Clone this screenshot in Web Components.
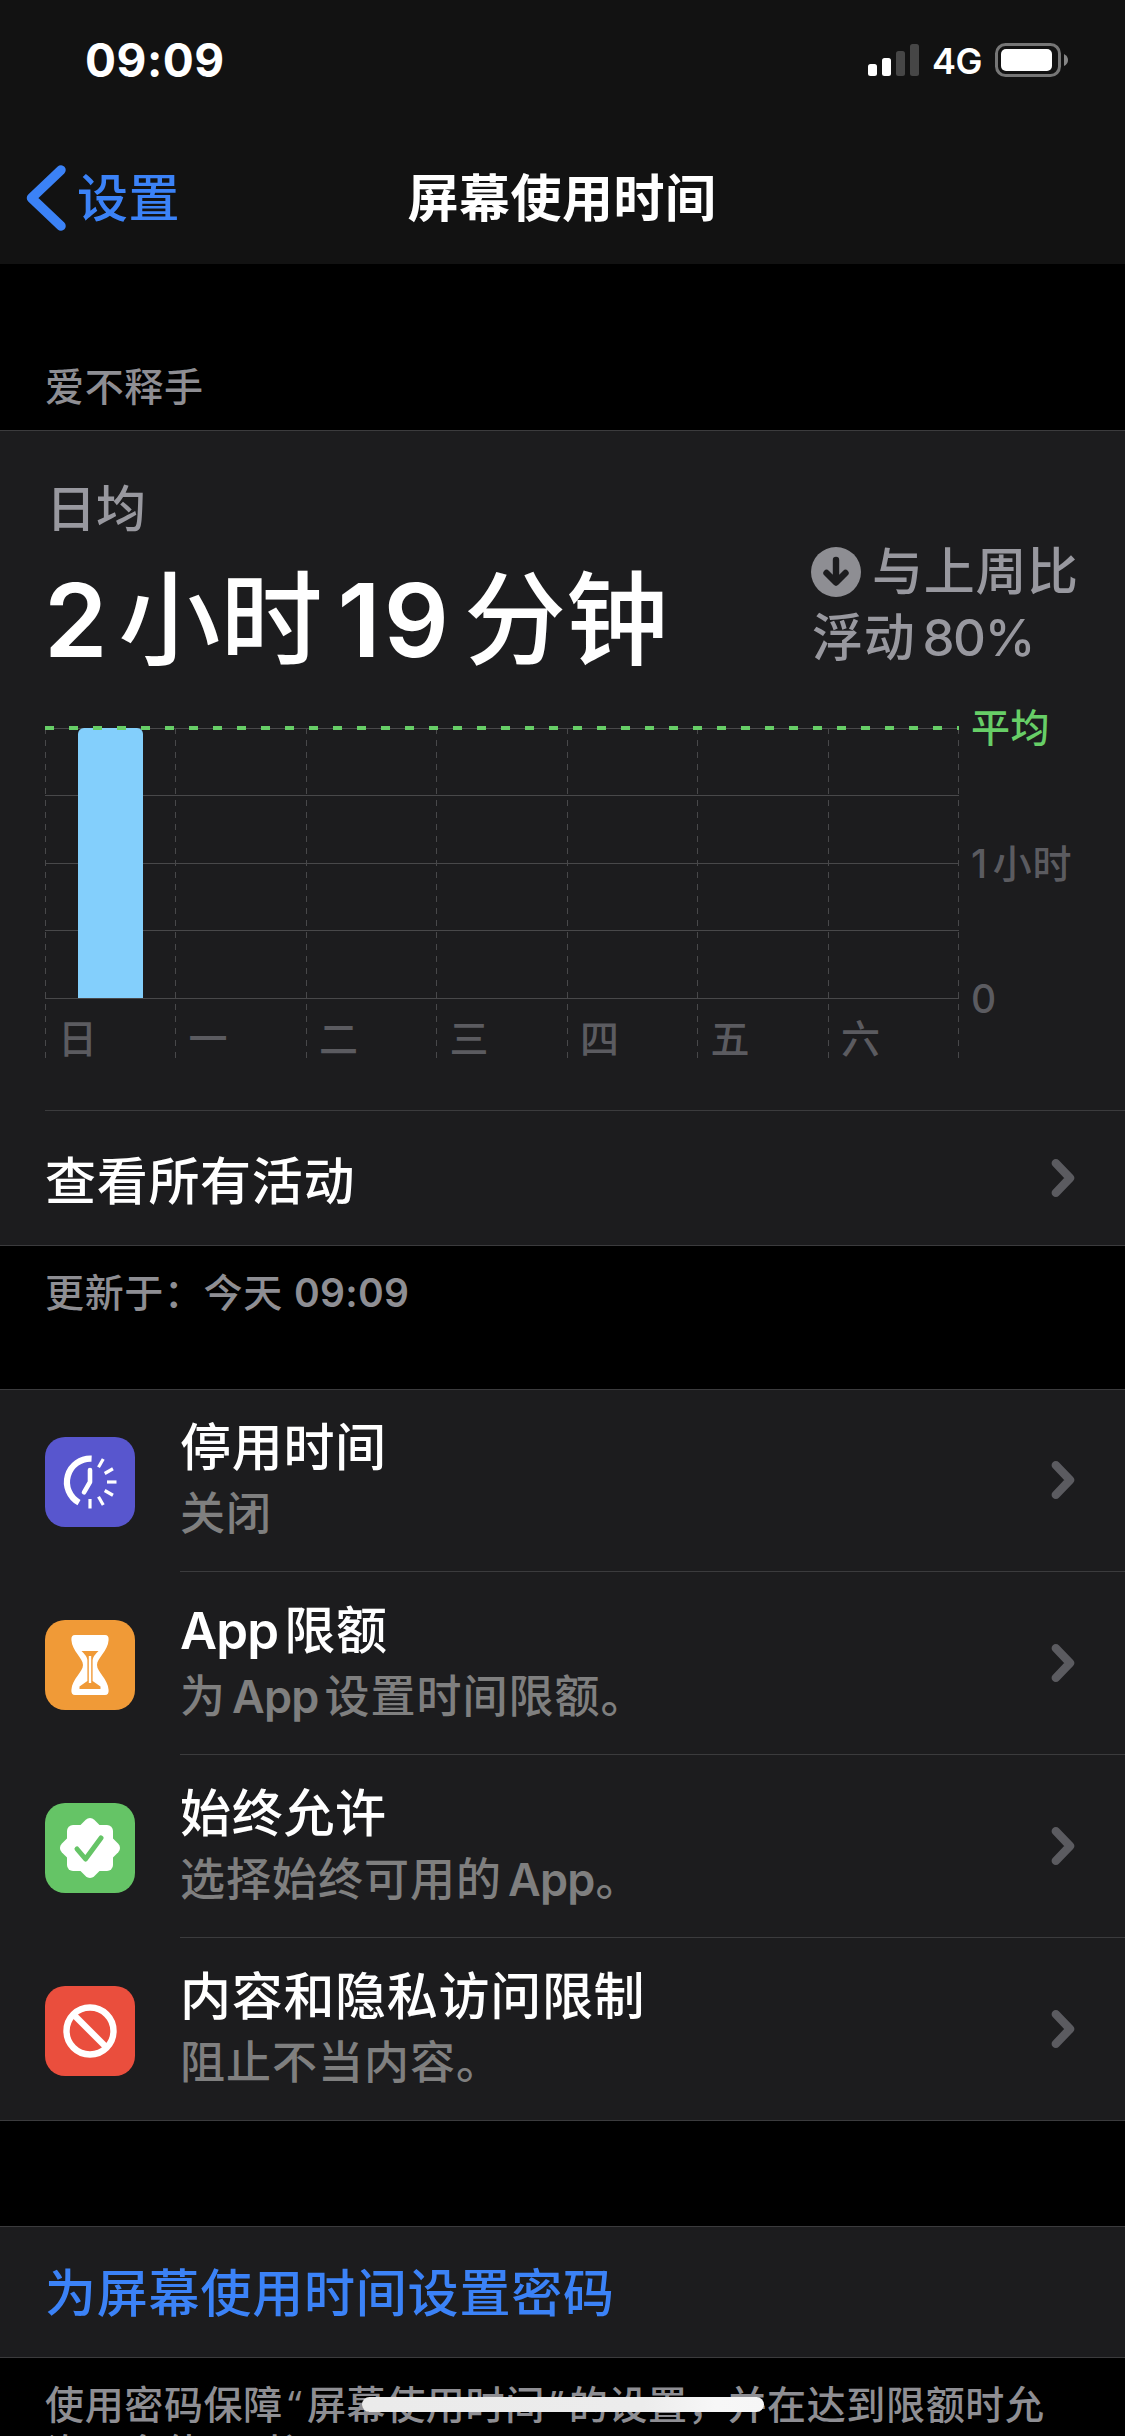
<!DOCTYPE html>
<html lang="zh-CN">
<head>
<meta charset="utf-8">
<title>屏幕使用时间</title>
<style>
  html, body { margin: 0; background: #000; }
  body {
    width: 1125px; height: 2436px; overflow: hidden; color: #fff;
    font-family: Inter, "Noto Sans CJK SC", sans-serif; font-weight: 500;
    --card: #1c1c1e; --line: #3b3b3d; --gray: #8e8e93; --blue: #3b82f7;
  }
  .q { display: inline-block; width: 24px; text-align: center; letter-spacing: 0; font-family: "Open Sans", sans-serif; }
</style>
</head>
<body>
<phone-screen>
  <status-bar slot="top" time="09:09" network="4G"></status-bar>
  <nav-bar slot="top" back="设置">屏幕使用时间</nav-bar>

  <section-note style="--h:166px;--top:99px">爱不释手</section-note>
  <list-card>
    <usage-summary></usage-summary>
    <usage-chart></usage-chart>
    <link-row>查看所有活动</link-row>
  </list-card>
  <section-note style="--h:143px;--top:23px">更新于：今天 <span style="letter-spacing:0.3px;font-weight:600">09:09</span></section-note>

  <list-card>
    <setting-row icon="downtime">停用时间<span slot="sub">关闭</span></setting-row>
    <setting-row icon="limits"><latin-run class="first">App</latin-run>限额<span slot="sub">为<latin-run>App</latin-run>设置时间限额。</span></setting-row>
    <setting-row icon="allowed">始终允许<span slot="sub">选择始终可用的<latin-run class="last">App</latin-run>。</span></setting-row>
    <setting-row icon="privacy" last>内容和隐私访问限制<span slot="sub">阻止不当内容。</span></setting-row>
  </list-card>

  <list-card style="margin-top:105px"><action-row>为屏幕使用时间设置密码</action-row></list-card>
  <section-note style="--h:140px;--top:22px">使用密码保障<span class="q">“</span>屏幕使用时间<span class="q">”</span>的设置，并在达到限额时允<br>许更多使用时间。</section-note>
</phone-screen>

<script>
const define = (name, html) => customElements.define(name, class extends HTMLElement {
  constructor() {
    super();
    this.attachShadow({ mode: 'open' });
  }
  connectedCallback() {
    this.shadowRoot.innerHTML = (typeof html === 'function' ? html(this) : html).trim();
  }
});

const chevron = `<svg width="24" height="40" viewBox="0 0 24 40"><path d="M4.8 5.2L19 20L4.8 34.8" fill="none" stroke="#5b5b60" stroke-width="8.4" stroke-linecap="round" stroke-linejoin="round"/></svg>`;

define('phone-screen', `
  <style>
    :host { display: block; position: relative; width: 1125px; height: 2436px; overflow: hidden; background: #000; }
    header { height: 264px; background: #121212; }
    .home { position: absolute; left: 362px; top: 2397px; width: 402px; height: 15px; border-radius: 8px;
      background: linear-gradient(90deg, #ebebeb, #ececec 70%, #f7f7f7 88%, #f6f6f6); }
  </style>
  <header><slot name="top"></slot></header>
  <main><slot></slot></main>
  <div class="home"></div>`);

define('status-bar', el => `
  <style>
    :host { display: flex; justify-content: space-between; height: 132px; padding: 0 57px 0 85px; box-sizing: border-box; }
    .time { padding-top: 33px; font-size: 46px; line-height: 54px; font-weight: 700; letter-spacing: 0.5px; }
    .right { display: flex; padding-top: 40px; }
    .net { margin: -3px 0 0 13px; font-size: 36px; line-height: 48px; font-weight: 600; width: 63px; letter-spacing: -.5px; }
  </style>
  <div class="time">${el.getAttribute('time')}</div>
  <div class="right">
    <svg width="51" height="40" viewBox="868 40 51 40">
      <g fill="#fff"><rect x="868" y="64" width="9" height="12" rx="2.5"/><rect x="882" y="58" width="9" height="18" rx="2.5"/></g>
      <g fill="#464646"><rect x="896" y="51" width="9" height="25" rx="2.5"/><rect x="910" y="44" width="9" height="32" rx="2.5"/></g>
    </svg>
    <div class="net">${el.getAttribute('network')}</div>
    <svg width="73" height="40" viewBox="995 40 73 40">
      <rect x="996.5" y="44.5" width="63" height="31" rx="9" fill="none" stroke="#767676" stroke-width="3"/>
      <rect x="1001" y="49" width="51" height="22" rx="5" fill="#fff"/>
      <path d="M1064 54Q1068 56 1068 60T1064 66Z" fill="#868686"/>
    </svg>
  </div>`);

define('nav-bar', el => `
  <style>
    :host { display: grid; grid-template-columns: 1fr auto 1fr; align-items: center; height: 132px;
      font-size: 51px; line-height: 60px; letter-spacing: 0.5px; }
    .back { display: flex; align-items: center; gap: 11px; padding-left: 26px; color: var(--blue); }
    .back span { padding-top: 2px; }
    .title { font-weight: 600; padding-top: 2px; margin-left: -1px; }
  </style>
  <div class="back">
    <svg width="40" height="66" viewBox="0 0 40 66"><path d="M35 5L5.5 33L35 61" fill="none" stroke="#3b82f7" stroke-width="9.5" stroke-linecap="round" stroke-linejoin="round"/></svg>
    <span>${el.getAttribute('back')}</span>
  </div>
  <div class="title"><slot></slot></div><div></div>`);

define('section-note', `
  <style>
    :host { display: block; box-sizing: border-box; height: var(--h); padding: var(--top) 0 0 45px; color: var(--gray);
      font-size: 39px; line-height: 48px; letter-spacing: 0.65px; white-space: nowrap; }
  </style><slot></slot>`);

define('list-card', `
  <style>
    :host { display: block; background: var(--card); box-shadow: inset 0 1px var(--line), inset 0 -1px var(--line); }
  </style><slot></slot>`);

define('latin-run', `
  <style>
    :host { display: inline; font-weight: 600; letter-spacing: -.8px; margin: 0 6px 0 6px; }
    :host(.first) { margin-left: 0; }
    :host(.last) { margin-right: 1px; }
  </style><slot></slot>`);

define('usage-summary', `
  <style>
    :host { display: flex; justify-content: space-between; height: 249px; padding: 49px 45px 0 45px; box-sizing: border-box; }
    .label { font-size: 50px; line-height: 60px; color: #98989f; padding-left: 1px; }
    .total { margin: 21px 0 0 -1px; font-size: 102px; line-height: 120px; white-space: nowrap; }
    .a, .b { font-weight: 600; }
    .a { margin-right: 11px; } .b { margin: 0 12px 0 15px; letter-spacing: 3px; }
    .trend { width: 269px; margin-top: 60px; font-size: 51px; line-height: 66px; letter-spacing: .7px; color: #98989f; }
    .row { display: flex; align-items: center; white-space: nowrap; }
    .row + .row { padding-left: 1px; }
    svg { margin-right: 11px; }
    .pct { margin-left: 7px; letter-spacing: -1.4px; }
  </style>
  <div>
    <div class="label">日均</div>
    <div class="total"><span class="a">2</span>小时<span class="b">19</span>分钟</div>
  </div>
  <div class="trend">
    <div class="row">
      <svg width="50" height="50" viewBox="0 0 50 50"><circle cx="25" cy="25" r="25" fill="#8e8e93"/><path d="M25 13V34M15.5 26L25 35.5L34.5 26" fill="none" stroke="#1c1c1e" stroke-width="6.4" stroke-linecap="round" stroke-linejoin="round"/></svg>与上周比</div>
    <div class="row">浮动<span class="pct">80%</span></div>
  </div>`);

define('usage-chart', () => {
  const xs = [45.5, 175.5, 306.5, 436.5, 567.5, 697.5, 828.5, 958.5].map(x => x - 45);
  const ys = [728.5, 795.5, 863.5, 930.5, 998.5].map(y => y - 726);
  return `
  <style>
    :host { display: flex; box-sizing: border-box; height: 431px; padding: 25px 0 0 45px; gap: 12px;
      font-size: 39px; line-height: 48px; color: #5b5b60; }
    .plot { display: grid; width: 914px; margin-top: 22px; height: 332px; }
    .plot > * { grid-area: 1 / 1; }
    .days { display: grid; grid-template-columns: repeat(7, 130.5px); align-self: end; height: 43px; line-height: 48px; }
    .days span { padding-left: 13px; }
    .axis { display: flex; flex-direction: column; justify-content: space-between; height: 319px; letter-spacing: .6px; }
    .axis i { font-style: normal; margin-right: 5px; }
    .avg { color: #67ce67; }
  </style>
  <div class="plot">
    <svg width="914" height="332" viewBox="0 0 914 332">
      <g stroke="#48484a">
        ${ys.map(y => `<path d="M0 ${y}H914"/>`).join('')}
        ${xs.map(x => `<path d="M${x} 2V332" stroke-dasharray="6"/>`).join('')}
      </g>
      <path d="M33 272V8a6 6 0 0 1 6-6h53a6 6 0 0 1 6 6v264z" fill="#83cffc"/>
      <path d="M0 2H914" stroke="#67ce67" stroke-width="4" stroke-dasharray="9 15"/>
    </svg>
    <div class="days">${[...'日一二三四五六'].map(d => `<span>${d}</span>`).join('')}</div>
  </div>
  <div class="axis"><div class="avg">平均</div><div><i>1</i>小时</div><div>0</div></div>`;
});

define('link-row', `
  <style>
    :host { display: flex; justify-content: space-between; align-items: center; height: 136px; box-sizing: border-box; margin-left: 45px; padding-right: 50px;
      border-top: 1px solid var(--line); font-size: 51px; line-height: 60px; letter-spacing: .7px; }
    .t { padding-top: 6px; }
    svg { display: block; margin-top: -1px; }
  </style><div class="t"><slot></slot></div>${chevron}`);

const glyphs = {
  downtime: ['#5856ce', `<path d="M46.6 21.6A23.5 23.5 0 0 0 34 65.6" fill="none" stroke="#fff" stroke-width="6.2"/>
    <path d="M45 33V45L39 55.3" fill="none" stroke="#fff" stroke-width="4.6" stroke-linecap="round" stroke-linejoin="round"/>
    <g stroke="#fff" stroke-width="3.2">${[-60, -30, 0, 30, 60, 90].map(a => `<path d="M62 45H71.5" transform="rotate(${a} 45 45)"/>`).join('')}</g>`],
  limits: ['#f09a37', `<path d="M30 15H60Q64 15 63.6 20C63 31 52 38 52 45S63 59 63.6 70Q64 75 60 75H30Q26 75 26.4 70C27 59 38 52 38 45S27 31 26.4 20Q26 15 30 15Z" fill="#fff"/>
    <path d="M36.5 31H53.5Q48 36 47.6 40V61Q52 64 55.5 66.5V69H34.5V66.5Q38 64 42.4 61V40Q42 36 36.5 31Z" fill="#f09a37"/>
    <path d="M45 36V63" stroke="#fff" stroke-width="2.4"/>`],
  allowed: ['#65c466', `<g fill="#fff"><rect x="22" y="22" width="46" height="46" rx="6"/><rect x="22" y="22" width="46" height="46" rx="6" transform="rotate(45 45 45)"/></g>
    <path d="M32 46L40.5 56L56 35" fill="none" stroke="#65c466" stroke-width="5" stroke-linecap="round" stroke-linejoin="round"/>`],
  privacy: ['#ea4e3d', `<g fill="none" stroke="#fff" stroke-width="6.4"><circle cx="45" cy="45" r="23.5"/><path d="M28.5 28.5L61.5 61.5"/></g>`]
};

define('setting-row', el => {
  const [color, art] = glyphs[el.getAttribute('icon')];
  return `
  <style>
    :host { display: flex; height: 183px; padding-left: 45px; box-sizing: border-box; }
    .icon { margin-top: 48px; width: 90px; height: 90px; border-radius: 20px; background: ${color}; }
    .icon svg { display: block; }
    .body { flex: 1; display: flex; justify-content: space-between; margin-left: 45px; padding: 29px 50px 0 0; box-sizing: border-box;
      border-bottom: ${el.hasAttribute('last') ? '0' : '1px solid var(--line)'}; }
    .title { font-size: 51px; line-height: 60px; letter-spacing: .7px; }
    .sub { margin-top: 9px; font-size: 45px; line-height: 54px; letter-spacing: 1px; color: #7f7f7f; }
    .chev { margin-top: 42px; }
  </style>
  <div class="icon"><svg width="90" height="90" viewBox="0 0 90 90">${art}</svg></div>
  <div class="body">
    <div><div class="title"><slot></slot></div><div class="sub"><slot name="sub"></slot></div></div>
    <div class="chev">${chevron}</div>
  </div>`;
});

define('action-row', `
  <style>
    :host { display: flex; align-items: center; height: 132px; box-sizing: border-box; padding: 3px 0 0 45px; color: var(--blue);
      font-size: 51px; line-height: 60px; letter-spacing: .8px; }
  </style><slot></slot>`);
</script>
</body>
</html>
